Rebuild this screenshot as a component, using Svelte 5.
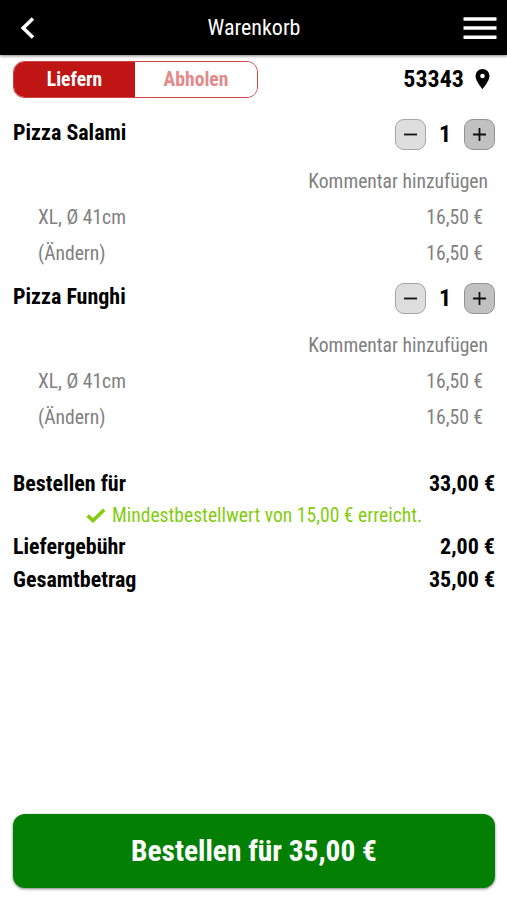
<script lang="ts">
	interface CartItem {
		name: string;
		amount: number;
		size: string;
		price: number;
	}

	let mode = $state("Liefern");
	let items: CartItem[] = $state([
		{ name: "Pizza Salami", amount: 1, size: "XL, Ø 41cm", price: 16.5 },
		{ name: "Pizza Funghi", amount: 1, size: "XL, Ø 41cm", price: 16.5 }
	]);

	const postcode = "53343";
	const minimum = 15;
	const fee = 2;

	let subtotal = $derived(items.reduce((sum, i) => sum + i.price * i.amount, 0));
	let total = $derived(subtotal + fee);

	function euro(value: number) {
		return value.toFixed(2).replace(".", ",") + " €";
	}

	function change(item: CartItem, step: number) {
		item.amount = Math.max(1, item.amount + step);
	}
</script>

<div class="page">
	<header>
		<button class="icon" aria-label="Zurück">
			<svg width="18" height="24" viewBox="0 0 18 24">
				<path d="M16 2.5L6.2 12L16 21.5" fill="none" stroke="#fff" stroke-width="3.6" />
			</svg>
		</button>
		<h1>Warenkorb</h1>
		<button class="icon" aria-label="Menü">
			<svg width="34" height="24" viewBox="0 0 34 24">
				<path d="M0.5 3H33.5M0.5 12H33.5M0.5 21.2H33.5" stroke="#fff" stroke-width="3.6" />
			</svg>
		</button>
	</header>

	<div class="options">
		<div class="toggle">
			<button class:active={mode === "Liefern"} onclick={() => (mode = "Liefern")}>Liefern</button>
			<button class:active={mode === "Abholen"} onclick={() => (mode = "Abholen")}>Abholen</button>
		</div>
		<div class="location">
			<span>{postcode}</span>
			<svg width="15" height="21" viewBox="0 0 15 21">
				<path fill-rule="evenodd" d="M7.5 0A7 7 0 0 0 0.5 7C0.5 12.1 7.5 20 7.5 20S14.5 12.1 14.5 7A7 7 0 0 0 7.5 0ZM7.5 4.7A2.3 2.3 0 1 1 7.5 9.3A2.3 2.3 0 1 1 7.5 4.7Z" />
			</svg>
		</div>
	</div>

	<main>
		{#each items as item}
			<section class="item">
				<div class="head">
					<h2>{item.name}</h2>
					<div class="amount">
						<button aria-label="Weniger" onclick={() => change(item, -1)}>
							<svg width="13" height="13" viewBox="0 0 13 13">
								<path d="M0 6.5H13" stroke="#111" stroke-width="1.8" />
							</svg>
						</button>
						<span>{item.amount}</span>
						<button class="plus" aria-label="Mehr" onclick={() => change(item, 1)}>
							<svg width="13" height="13" viewBox="0 0 13 13">
								<path d="M0 6.5H13M6.5 0V13" stroke="#111" stroke-width="1.8" />
							</svg>
						</button>
					</div>
				</div>
				<div class="comment">Kommentar hinzufügen</div>
				<div class="detail">
					<span>{item.size}</span>
					<span>{euro(item.price)}</span>
				</div>
				<div class="detail">
					<span>(Ändern)</span>
					<span>{euro(item.price)}</span>
				</div>
			</section>
		{/each}

		<section class="summary">
			<div class="sum">
				<span>Bestellen für</span>
				<span>{euro(subtotal)}</span>
			</div>
			{#if subtotal >= minimum}
				<div class="reached">
					<svg width="20" height="15" viewBox="0 0 20 15">
						<path d="M1.6 7.6L7 12.6L18.2 1.8" fill="none" stroke="#85cc10" stroke-width="3.6" />
					</svg>
					<span>Mindestbestellwert von {euro(minimum)} erreicht.</span>
				</div>
			{/if}
			<div class="sum">
				<span>Liefergebühr</span>
				<span>{euro(fee)}</span>
			</div>
			<div class="sum">
				<span>Gesamtbetrag</span>
				<span>{euro(total)}</span>
			</div>
		</section>
	</main>

	<button class="order">Bestellen für {euro(total)}</button>
</div>

<style>
	:global(body) {
		margin: 0;
		background: #fff;
	}

	.page {
		box-sizing: border-box;
		display: flex;
		flex-direction: column;
		height: 900px;
		padding-bottom: 12px;
		font-family: "Roboto Condensed", Roboto, sans-serif;
		font-stretch: 75%;
		font-size: 22px;
		color: #000;
		background: #fff;
	}

	button {
		padding: 0;
		border: none;
		font: inherit;
		font-stretch: inherit;
		cursor: pointer;
	}

	svg {
		display: block;
	}

	header {
		display: grid;
		grid-template-columns: 54px 1fr 60px;
		align-items: center;
		box-sizing: border-box;
		height: 55px;
		padding: 0 10px 0 17px;
		background: #000;
		box-shadow: 0 1px 3px rgba(0, 0, 0, 0.5);
	}

	.icon {
		justify-self: start;
		background: none;
	}

	.icon:last-child {
		justify-self: end;
	}

	h1 {
		margin: 0;
		font-size: 22px;
		font-weight: 400;
		text-align: center;
		color: #fff;
	}

	.options {
		display: flex;
		justify-content: space-between;
		align-items: center;
		height: 36px;
		padding: 6px 17px 0 13px;
	}

	.toggle {
		display: flex;
		box-sizing: border-box;
		width: 245px;
		height: 37px;
		border: 1px solid #cf4444;
		border-radius: 11px;
		overflow: hidden;
	}

	.toggle button {
		flex: 1;
		font-size: 19.6px;
		font-weight: 700;
		color: #e38a8a;
		background: #fff;
	}

	.toggle .active {
		flex: 0 0 121px;
		color: #fff;
		background: #c01515;
	}

	.location {
		display: flex;
		align-items: center;
		gap: 11px;
		font-size: 24px;
		font-weight: 700;
	}

	main {
		flex: 1;
		padding: 19px 12px 0 13px;
	}

	.item {
		margin-bottom: 8px;
	}

	.head {
		display: flex;
		justify-content: space-between;
		height: 36px;
		margin-bottom: 12px;
	}

	h2 {
		margin: 0;
		font-size: 22px;
		font-weight: 700;
		line-height: 34px;
	}

	.amount {
		display: flex;
		align-items: center;
		font-size: 24px;
		font-weight: 700;
	}

	.amount span {
		width: 38px;
		text-align: center;
	}

	.amount button {
		display: grid;
		place-items: center;
		box-sizing: border-box;
		width: 31px;
		height: 31px;
		border: 1px solid #a5a5a5;
		border-radius: 9px;
		background: #dedede;
	}

	.amount .plus {
		border-color: #939393;
		background: #c1c1c1;
	}

	.comment,
	.detail {
		font-size: 19.6px;
		line-height: 36px;
		color: #808080;
	}

	.comment {
		padding-right: 7px;
		text-align: right;
	}

	.detail {
		display: flex;
		justify-content: space-between;
		padding: 0 12px 0 25px;
	}

	.summary {
		padding-top: 23px;
	}

	.sum {
		display: flex;
		justify-content: space-between;
		font-weight: 700;
		line-height: 33px;
	}

	.reached {
		display: flex;
		justify-content: center;
		align-items: center;
		gap: 6px;
		height: 30px;
		font-size: 19.6px;
		color: #85cc10;
	}

	.order {
		flex: none;
		height: 74px;
		margin: 0 12px 0 13px;
		padding-bottom: 1px;
		border-radius: 12px;
		font-size: 29.4px;
		font-weight: 700;
		color: #fff;
		background: #038003;
		box-shadow: 0 1px 3px rgba(0, 0, 0, 0.5);
	}
</style>
